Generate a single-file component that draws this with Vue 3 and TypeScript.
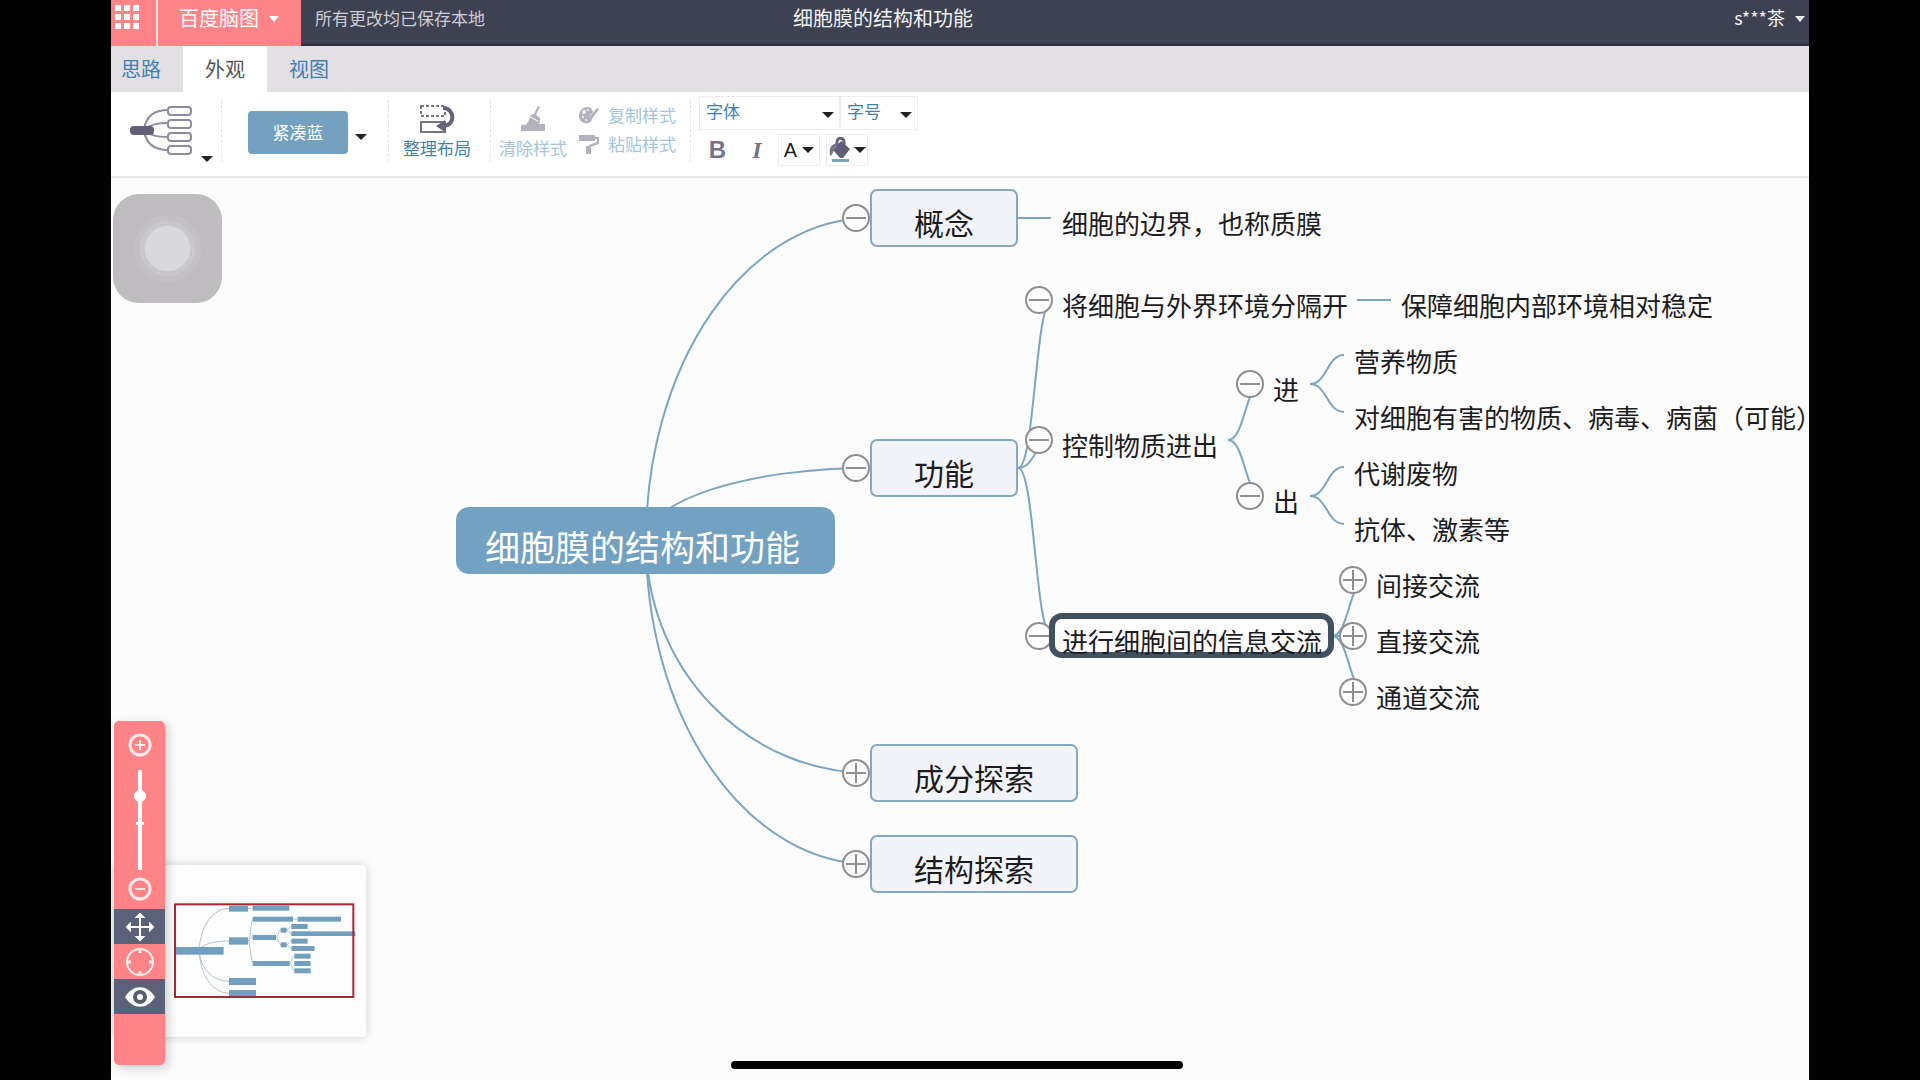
<script setup lang="ts">
import { ref } from 'vue'

type Kind = 'root' | 'branch' | 'leaf'

interface MapNode {
  text: string
  tail?: string
  kind: Kind
  x: number
  y: number
  width?: number
  selected?: boolean
}

interface Toggle {
  x: number
  y: number
  open: boolean
  label: string
}

const nodes: MapNode[] = [
  { text: '细胞膜的结构和功能', kind: 'root', x: 345, y: 329 },
  { text: '概念', kind: 'branch', x: 759, y: 11, width: 148 },
  { text: '功能', kind: 'branch', x: 759, y: 261, width: 148 },
  { text: '成分探索', kind: 'branch', x: 759, y: 566, width: 208 },
  { text: '结构探索', kind: 'branch', x: 759, y: 657, width: 208 },
  { text: '细胞的边界，也称质膜', kind: 'leaf', x: 951, y: 26 },
  { text: '将细胞与外界环境分隔开', kind: 'leaf', x: 951, y: 108 },
  { text: '保障细胞内部环境相对稳定', kind: 'leaf', x: 1290, y: 108 },
  { text: '控制物质进出', kind: 'leaf', x: 951, y: 248 },
  { text: '进', kind: 'leaf', x: 1162, y: 192 },
  { text: '出', kind: 'leaf', x: 1162, y: 304 },
  { text: '营养物质', kind: 'leaf', x: 1243, y: 164 },
  { text: '对细胞有害的物质、病毒、病菌（可能', tail: '）', kind: 'leaf', x: 1243, y: 220 },
  { text: '代谢废物', kind: 'leaf', x: 1243, y: 276 },
  { text: '抗体、激素等', kind: 'leaf', x: 1243, y: 332 },
  { text: '进行细胞间的信息交流', kind: 'leaf', x: 951, y: 444, selected: true },
  { text: '间接交流', kind: 'leaf', x: 1265, y: 388 },
  { text: '直接交流', kind: 'leaf', x: 1265, y: 444 },
  { text: '通道交流', kind: 'leaf', x: 1265, y: 500 },
]

const toggles: Toggle[] = [
  { x: 745, y: 40, open: true, label: '概念' },
  { x: 745, y: 290, open: true, label: '功能' },
  { x: 745, y: 595, open: false, label: '成分探索' },
  { x: 745, y: 686, open: false, label: '结构探索' },
  { x: 928, y: 122, open: true, label: '将细胞与外界环境分隔开' },
  { x: 928, y: 262, open: true, label: '控制物质进出' },
  { x: 928, y: 458, open: true, label: '进行细胞间的信息交流' },
  { x: 1139, y: 206, open: true, label: '进' },
  { x: 1139, y: 318, open: true, label: '出' },
  { x: 1242, y: 402, open: false, label: '间接交流' },
  { x: 1242, y: 458, open: false, label: '直接交流' },
  { x: 1242, y: 514, open: false, label: '通道交流' },
]

const arc = (x: number, y: number): string => {
  const dy = y - 363
  return `M535 363A224 ${Math.abs(dy)} 0 0 ${dy < 0 ? 1 : 0} ${x} ${y}`
}
const curve = (x1: number, y1: number, x2: number, y2: number): string => {
  const mid = (x1 + x2) / 2
  return `M${x1} ${y1}C${mid} ${y1} ${mid} ${y2} ${x2} ${y2}`
}

const links: string[] = [
  arc(759, 40), arc(759, 290), arc(759, 595), arc(759, 686),
  'M907 40H940', 'M1246 122H1280',
  curve(907, 290, 941, 122), curve(907, 290, 941, 262), curve(907, 290, 941, 458),
  curve(1117, 262, 1151, 206), curve(1117, 262, 1151, 318),
  curve(1199, 206, 1233, 177), curve(1199, 206, 1233, 234),
  curve(1199, 318, 1233, 289), curve(1199, 318, 1233, 346),
  curve(1221, 458, 1255, 402), 'M1221 458H1240', curve(1221, 458, 1255, 514),
]

const miniBlocks: number[][] = [
  [228, 711, 143, 23], [387, 587, 57, 18], [387, 682, 57, 22], [387, 804, 81, 21], [387, 840, 81, 18],
  [458, 587, 110, 15], [458, 620, 121, 15], [593, 620, 130, 15], [458, 675, 70, 15],
  [542, 653, 18, 15], [542, 697, 18, 15], [574, 642, 49, 15], [574, 664, 192, 14],
  [574, 686, 49, 15], [574, 708, 70, 15], [458, 753, 111, 15],
  [583, 731, 49, 15], [583, 753, 49, 15], [583, 775, 49, 15],
]
const miniLinks: string[] = [
  'M298 722A89 127 0 0 1 387 595', 'M298 722A89 29 0 0 1 387 693',
  'M298 722A89 92 0 0 0 387 814', 'M298 722A89 128 0 0 0 387 850',
  'M444 595H458', 'M579 627H593', curve(444, 693, 460, 627), curve(444, 693, 458, 682), curve(444, 693, 460, 760),
  curve(528, 682, 542, 660), curve(528, 682, 542, 704),
  curve(560, 660, 574, 649), curve(560, 660, 574, 671), curve(560, 704, 574, 693), curve(560, 704, 574, 715),
  curve(569, 760, 583, 738), curve(569, 760, 583, 782),
]

const zoom = ref(77)
</script>

<template>
  <div class="screen">
    <div class="app">
      <header class="topbar">
        <button class="grid-btn" aria-label="应用">
          <svg width="24" height="24" viewBox="0 0 24 24" fill="#fff">
            <path d="M0 0h6v6H0zM9 0h6v6H9zM18 0h6v6h-6zM0 9h6v6H0zM9 9h6v6H9zM18 9h6v6h-6zM0 18h6v6H0zM9 18h6v6H9zM18 18h6v6h-6z" />
          </svg>
        </button>
        <button class="brand">百度脑图<i class="caret"></i></button>
        <span class="saved">所有更改均已保存本地</span>
        <h1 class="title">细胞膜的结构和功能</h1>
        <button class="user">s***茶<i class="caret"></i></button>
      </header>

      <nav class="tabs">
        <a href="#" class="tab first">思路</a>
        <a href="#" class="tab active">外观</a>
        <a href="#" class="tab">视图</a>
      </nav>

      <section class="toolbar">
        <div class="group template-group">
          <button class="template-btn" aria-label="结构模板">
            <svg width="63" height="50" viewBox="0 0 63 50" fill="none" stroke="#8f8ca0" stroke-width="2">
              <path d="M14 23C16 11 24 4 38 4M14 23C22 18 28 17 38 17M14 25C22 30 28 31 38 31M14 25C16 37 24 44 38 44" />
              <rect x="38" y="1" width="23" height="8" rx="3" fill="#fff" />
              <rect x="38" y="14" width="23" height="8" rx="3" fill="#fff" />
              <rect x="38" y="27" width="23" height="8" rx="3" fill="#fff" />
              <rect x="38" y="40" width="23" height="8" rx="3" fill="#fff" />
              <rect x="0" y="20" width="24" height="9" rx="4" fill="#625f78" stroke="none" />
            </svg>
            <i class="caret"></i>
          </button>
        </div>
        <div class="group theme-group">
          <button class="theme-btn">紧凑蓝</button>
          <button class="plain" aria-label="选择主题"><i class="caret"></i></button>
        </div>
        <div class="group layout-group">
          <button class="stacked">
            <svg width="36" height="30" viewBox="0 0 36 30" fill="none" stroke="#77748a" stroke-width="2">
              <path d="M2 2H26V12H2Z" stroke-dasharray="3 2" />
              <rect x="2" y="18" width="24" height="10" />
              <path d="M24 4C36 4 37 22 24 22" stroke="#66637a" stroke-width="4" />
              <path d="M26 16L17 22L26 28Z" fill="#66637a" stroke="none" />
            </svg>
            整理布局
          </button>
        </div>
        <div class="group style-group">
          <button class="stacked" disabled>
            <svg width="26" height="26" viewBox="0 0 26 26" fill="#b3b1bd">
              <path d="M18 0l2 1-4 8 3 2c2 2 1 4 0 7H6c4-3 3-7 5-9l3-1zM1 18h24v7H1z" />
              <path d="M10 11l8 4M1 19c3 0 4-1 6-1" stroke="#fff" stroke-width="1" />
            </svg>
            清除样式
          </button>
          <div class="style-pair">
            <button class="inline" disabled>
              <svg width="20" height="20" viewBox="0 0 20 20" fill="#b3b1bd">
                <path d="M9 2C3 2 0 6 0 11s4 8 9 7c3-1 4-2 4-4l-3-1 1-3 3-3C13 4 12 2 9 2z" />
                <path d="M18 3l2 1-7 10-4 2 1-4z" />
                <g fill="#fff"><circle cx="5" cy="7" r="2" /><circle cx="4" cy="12" r="1" /><circle cx="9" cy="5" r="1" /><circle cx="7" cy="15" r="1" /></g>
              </svg>
              复制样式
            </button>
            <button class="inline" disabled>
              <svg width="20" height="20" viewBox="0 0 20 20" fill="#b3b1bd">
                <path d="M0 1h16v6H0zM16 3h4v7l-9 3h-1v-2l8-3V5h-2zM7 12h5v8H7z" />
              </svg>
              粘贴样式
            </button>
          </div>
        </div>
        <div class="font-group">
          <div class="font-row">
            <label class="picker family">
              <select aria-label="字体"><option>字体</option></select>
            </label>
            <label class="picker size">
              <select aria-label="字号"><option>字号</option></select>
            </label>
          </div>
          <div class="font-row second">
            <button class="plain bold">B</button>
            <button class="plain italic">I</button>
            <button class="boxed color">A<i class="caret"></i></button>
            <button class="boxed" aria-label="背景色">
              <svg width="22" height="26" viewBox="0 0 22 26">
                <path d="M8 9V5c0-5 7-5 7 0v5" fill="none" stroke="#66637a" stroke-width="3" />
                <path d="M12 4l9 8-7 9H11L4 13z" fill="#605e78" />
                <path d="M9 6C1 7 0 12 1 19c3-1 3-5 5-8z" fill="#77748a" />
                <rect x="3" y="22" width="17" height="3" fill="#7fa3ba" />
              </svg>
              <i class="caret"></i>
            </button>
          </div>
        </div>
      </section>

      <main class="canvas">
        <svg class="links" width="1698" height="902" viewBox="0 0 1698 902" fill="none" stroke="#7ba5c0" stroke-width="2">
          <path v-for="d in links" :key="d" :d="d" />
        </svg>

        <button
          v-for="t in toggles"
          :key="t.label"
          class="toggle"
          :aria-label="(t.open ? '收起 ' : '展开 ') + t.label"
          :style="{ left: t.x - 14 + 'px', top: t.y - 14 + 'px' }"
        >
          <svg width="28" height="28" viewBox="0 0 28 28" fill="#fdfdfe" stroke="#918e92" stroke-width="2">
            <circle cx="14" cy="14" r="13" />
            <path :d="t.open ? 'M4 14H24' : 'M4 14H24M14 4V24'" />
          </svg>
        </button>

        <div
          v-for="n in nodes"
          :key="n.text + n.kind"
          class="node"
          :class="[n.kind, { selected: n.selected }]"
          :style="{ left: n.x + 'px', top: n.y + 'px', width: n.width ? n.width + 'px' : undefined }"
        ><span>{{ n.text }}<span v-if="n.tail" class="half">{{ n.tail }}</span></span></div>

        <div class="assist">
          <svg width="109" height="109" viewBox="0 0 110 110">
            <circle cx="55" cy="55" r="34" fill="#c2c0c3" />
            <circle cx="55" cy="55" r="28" fill="#c9c7ca" />
            <circle cx="55" cy="55" r="23" fill="#d9d8da" />
          </svg>
        </div>

        <div class="minimap">
          <svg width="252" height="172" viewBox="42 465 756 516">
            <g fill="none" stroke="#b4c2d0" stroke-width="3">
              <path v-for="d in miniLinks" :key="d" :d="d" />
            </g>
            <g fill="#739fbf">
              <rect v-for="(b, i) in miniBlocks" :key="i" :x="b[0]" :y="b[1]" :width="b[2]" :height="b[3]" />
            </g>
            <rect x="225" y="583" width="535" height="278" fill="none" stroke="#a82838" stroke-width="6" />
          </svg>
        </div>

        <aside class="zoom-panel">
          <button class="zoom-btn" aria-label="放大">
            <svg width="24" height="24" viewBox="0 0 24 24" fill="none" stroke="#ffe9ea" stroke-width="3">
              <circle cx="12" cy="12" r="10" /><path d="M7 12H17M12 7V17" stroke-width="2" />
            </svg>
          </button>
          <div class="slider">
            <input v-model.number="zoom" type="range" min="0" max="100" aria-label="缩放" />
          </div>
          <button class="zoom-btn" aria-label="缩小">
            <svg width="24" height="24" viewBox="0 0 24 24" fill="none" stroke="#ffe9ea" stroke-width="3">
              <circle cx="12" cy="12" r="10" /><path d="M7 12H17" stroke-width="2" />
            </svg>
          </button>
          <div class="nav-cells">
            <button class="cell dark" aria-label="拖动画布">
              <svg width="30" height="30" viewBox="0 0 30 30" fill="#fff" stroke="#fff" stroke-width="2">
                <path d="M15 4V26M4 15H26" />
                <path d="M15 2l3 3h-6zM15 28l3-3h-6zM2 15l3-3v6zM28 15l-3-3v6z" />
              </svg>
            </button>
            <button class="cell" aria-label="定位根节点">
              <svg width="30" height="30" viewBox="0 0 30 30" fill="none" stroke="#ffeced" stroke-width="2">
                <circle cx="15" cy="15" r="13" />
                <path d="M15 1V6M15 24V29M1 15H6M24 15H29" stroke-width="3" />
              </svg>
            </button>
            <button class="cell dark" aria-label="导航器">
              <svg width="30" height="22" viewBox="0 0 30 22">
                <path d="M0 11C8-2 22-2 30 11C22 24 8 24 0 11Z" fill="#fff" />
                <circle cx="15" cy="11" r="5" fill="#fff" stroke="#575d75" stroke-width="4" />
              </svg>
            </button>
          </div>
        </aside>

        <div class="home-bar"></div>
      </main>
    </div>
  </div>
</template>

<style>
body {
  margin: 0;
  background: #000;
}
</style>

<style scoped>
.screen {
  padding: 0 111px;
  font-family: "Noto Sans CJK SC", sans-serif;
}
.app {
  display: flex;
  flex-direction: column;
  min-height: 100vh;
  background: #fcfcfd;
}
button {
  padding: 0;
  border: 0;
  background: none;
  color: inherit;
  font: inherit;
  white-space: nowrap;
  cursor: pointer;
}
svg {
  display: block;
  flex: none;
}
.caret {
  display: block;
  flex: none;
  border: 5px solid transparent;
  border-top: 6px solid #222;
  border-bottom: 0;
}

.topbar {
  display: flex;
  height: 44px;
  border-bottom: 2px solid #302e45;
  background: #3d4151;
  color: #f2f2f5;
  font-size: 20px;
  line-height: 35px;
}
.topbar .caret {
  border-top-color: #fff;
}
.grid-btn,
.brand {
  display: flex;
  height: 46px;
  background: #ff8488;
  color: #fff;
}
.grid-btn {
  width: 45px;
  padding: 5px 0 0 4px;
  box-sizing: border-box;
}
.brand {
  box-sizing: border-box;
  width: 145px;
  gap: 10px;
  padding-left: 21px;
  border-left: 2px solid #ffe0e0;
}
.brand .caret,
.user .caret {
  margin-top: 16px;
}
.saved {
  width: 478px;
  padding-left: 14px;
  color: #cdced6;
  font-size: 17px;
  line-height: 36px;
}
.title {
  margin: 0;
  flex: 1;
  font-size: 20px;
  font-weight: 400;
}
.user {
  display: flex;
  gap: 10px;
  padding-right: 4px;
  font-size: 18px;
}

.tabs {
  display: flex;
  height: 46px;
  background: #e3e0e3;
}
.tab {
  padding: 0 22px;
  color: #4080b4;
  font-size: 20px;
  line-height: 46px;
  text-decoration: none;
}
.tab.first {
  padding-left: 10px;
}
.tab.active {
  background: #fff;
  color: #555;
}

.toolbar {
  display: flex;
  align-items: flex-start;
  height: 84px;
  border-bottom: 2px solid #e6e5e7;
  background: #fff;
  color: #3f80b3;
  font-size: 17px;
  line-height: 24px;
}
.group {
  display: flex;
  box-sizing: border-box;
  height: 62px;
  margin-top: 8px;
  border-right: 1px dashed #e4e2e5;
}
.toolbar .caret {
  border-width: 6px 6px 0;
}
.template-group {
  width: 111px;
  padding-left: 19px;
}
.template-btn {
  display: flex;
  gap: 8px;
  align-items: flex-end;
  height: 62px;
}
.template-btn svg {
  align-self: flex-start;
  margin-top: 6px;
}
.theme-group {
  width: 167px;
  gap: 7px;
  align-items: center;
  padding: 2px 0 0 26px;
}
.theme-btn {
  width: 100px;
  height: 43px;
  border-radius: 4px;
  background: #73a1bf;
  color: #fff;
}
.theme-group .plain {
  padding-top: 10px;
}
.layout-group {
  width: 102px;
  padding-left: 14px;
}
.stacked {
  display: flex;
  flex-direction: column;
  align-items: center;
  justify-content: flex-end;
  gap: 2px;
  height: 60px;
}
.style-group {
  width: 200px;
  gap: 12px;
  padding-left: 8px;
}
.style-group button {
  color: #a5c4dd;
  cursor: default;
}
.style-group .stacked {
  gap: 4px;
}
.style-pair {
  display: flex;
  flex-direction: column;
  gap: 5px;
  padding-top: 3px;
}
.inline {
  display: flex;
  gap: 9px;
  align-items: center;
}
.font-group {
  padding: 4px 0 0 8px;
}
.font-row {
  display: flex;
}
.picker {
  position: relative;
}
.picker::after {
  content: "";
  position: absolute;
  right: 6px;
  top: 16px;
  border: 6px solid transparent;
  border-top-color: #222;
  border-bottom: 0;
  pointer-events: none;
}
.picker select {
  box-sizing: border-box;
  width: 100%;
  height: 34px;
  padding: 0 20px 4px 6px;
  border: 1px solid #eeebee;
  border-radius: 0;
  appearance: none;
  background: #fff;
  color: #3f80b3;
  font: inherit;
}
.family {
  width: 141px;
}
.size {
  width: 78px;
}
.second {
  height: 32px;
  margin-top: 4px;
}
.bold,
.italic {
  color: #75728a;
  font-size: 24px;
  font-weight: 700;
}
.bold {
  width: 37px;
  font-family: "Liberation Sans", sans-serif;
}
.italic {
  width: 42px;
  font-family: "Liberation Serif", serif;
  font-style: italic;
}
.boxed {
  display: flex;
  box-sizing: border-box;
  width: 42px;
  gap: 3px;
  align-items: center;
  justify-content: center;
  margin-right: 6px;
  border: 1px solid #eeebee;
}
.color {
  gap: 5px;
  color: #222;
  font: 20px "Liberation Sans", sans-serif;
}

.canvas {
  position: relative;
  flex: 1;
  min-height: 902px;
  overflow: hidden;
}
.links {
  position: absolute;
  left: 0;
  top: 0;
}
.toggle {
  position: absolute;
}
.node {
  position: absolute;
  box-sizing: border-box;
  color: #1c1c1e;
  white-space: nowrap;
}
.leaf {
  font-size: 26px;
  line-height: 38px;
}
/* closing bracket takes its half-width advance at the end of a line */
.half {
  font-feature-settings: "halt";
}
.branch {
  height: 58px;
  padding: 10px 0 0 42px;
  border: 2px solid #84a9c1;
  border-radius: 7px;
  background: #f2f4fa;
  font-size: 30px;
  line-height: 42px;
}
.root {
  width: 379px;
  height: 67px;
  padding: 14px 0 0 29px;
  border-radius: 13px;
  background: #73a1c1;
  color: #fff;
  font-size: 35px;
  line-height: 50px;
}
.selected::before {
  content: "";
  position: absolute;
  left: -13px;
  top: -9px;
  box-sizing: border-box;
  width: 285px;
  height: 45px;
  border: 6px solid #42515f;
  border-radius: 13px;
  background: #fdfdfe;
}
.selected span {
  position: relative;
}

.assist {
  position: absolute;
  left: 2px;
  top: 16px;
  border-radius: 26px;
  background: #bebcbf;
}
.minimap {
  position: absolute;
  left: 3px;
  bottom: 43px;
  border-radius: 4px;
  background: #fdfdfe;
  box-shadow: 0 0 10px rgba(60, 50, 60, 0.22);
}
.zoom-panel {
  position: absolute;
  left: 3px;
  bottom: 15px;
  display: flex;
  flex-direction: column;
  align-items: center;
  box-sizing: border-box;
  width: 51px;
  height: 344px;
  padding-top: 12px;
  border-radius: 5px;
  background: #ff8488;
  box-shadow: 3px 3px 10px rgba(60, 50, 60, 0.25);
}
.slider {
  position: relative;
  width: 12px;
  height: 100px;
  margin: 13px 0 7px;
}
.slider::before {
  content: "";
  position: absolute;
  left: 2px;
  top: 52px;
  width: 8px;
  height: 3px;
  background: #fff;
}
.slider input {
  position: relative;
  display: block;
  width: 12px;
  height: 100px;
  margin: 0;
  appearance: none;
  background: linear-gradient(#fff, #fff) center / 4px 100% no-repeat;
  writing-mode: vertical-lr;
  direction: rtl;
}
.slider input::-webkit-slider-thumb {
  appearance: none;
  width: 12px;
  height: 12px;
  border-radius: 50%;
  background: #fff;
}
.nav-cells {
  align-self: stretch;
  margin-top: 8px;
}
.cell {
  display: flex;
  align-items: center;
  justify-content: center;
  width: 100%;
  height: 35px;
}
.cell.dark {
  background: #5b6179;
}
.home-bar {
  position: absolute;
  left: 620px;
  bottom: 11px;
  width: 452px;
  height: 8px;
  border-radius: 4px;
  background: #000;
}
</style>
